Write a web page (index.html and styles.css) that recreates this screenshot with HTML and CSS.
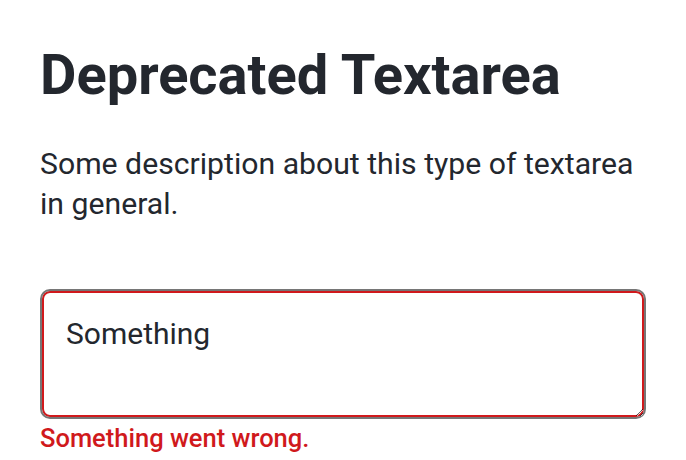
FILE: index.html
```html
<!DOCTYPE html>
<html lang="en">
<head>
<meta charset="utf-8">
<title>Deprecated Textarea</title>
<link rel="stylesheet" href="styles.css">
</head>
<body>
<main class="page">
  <h1 class="title">Deprecated Textarea</h1>
  <p class="description">Some description about this type of textarea in general.</p>
  <div class="field">
    <textarea class="textarea textarea--error" rows="2" aria-invalid="true">Something</textarea>
    <div class="error">Something went wrong.</div>
  </div>
</main>
</body>
</html>
```
FILE: styles.css
```css
html, body {
  margin: 0;
  padding: 0;
  background: #ffffff;
}
body {
  font-family: Roboto, "Liberation Sans", Arial, sans-serif;
  color: #23272e;
}
.page {
  padding: 43px 40px 0 40px;
  display: flex;
  flex-direction: column;
}
.title {
  margin: 0;
  font-size: 56px;
  line-height: 64px;
  font-weight: 700;
  letter-spacing: 0;
}
.description {
  margin: 37px 0 0 0;
  font-size: 30.2px;
  line-height: 40px;
  font-weight: 400;
}
.field {
  margin-top: 65px;
  display: flex;
  flex-direction: column;
}
.textarea {
  box-sizing: border-box;
  width: 100%;
  height: 130px;
  margin: 0;
  padding: 23px 24px;
  border: 2px solid #767676;
  border-radius: 10px;
  font-family: Roboto, "Liberation Sans", Arial, sans-serif;
  font-size: 30px;
  line-height: 40px;
  color: #23272e;
  background: #ffffff;
  resize: vertical;
  outline: none;
}
.textarea--error {
  box-shadow: inset 0 0 0 2px #d0191c;
}
.error {
  margin-top: 3px;
  font-size: 25.5px;
  line-height: 32px;
  font-weight: 500;
  color: #d0191c;
}
```
